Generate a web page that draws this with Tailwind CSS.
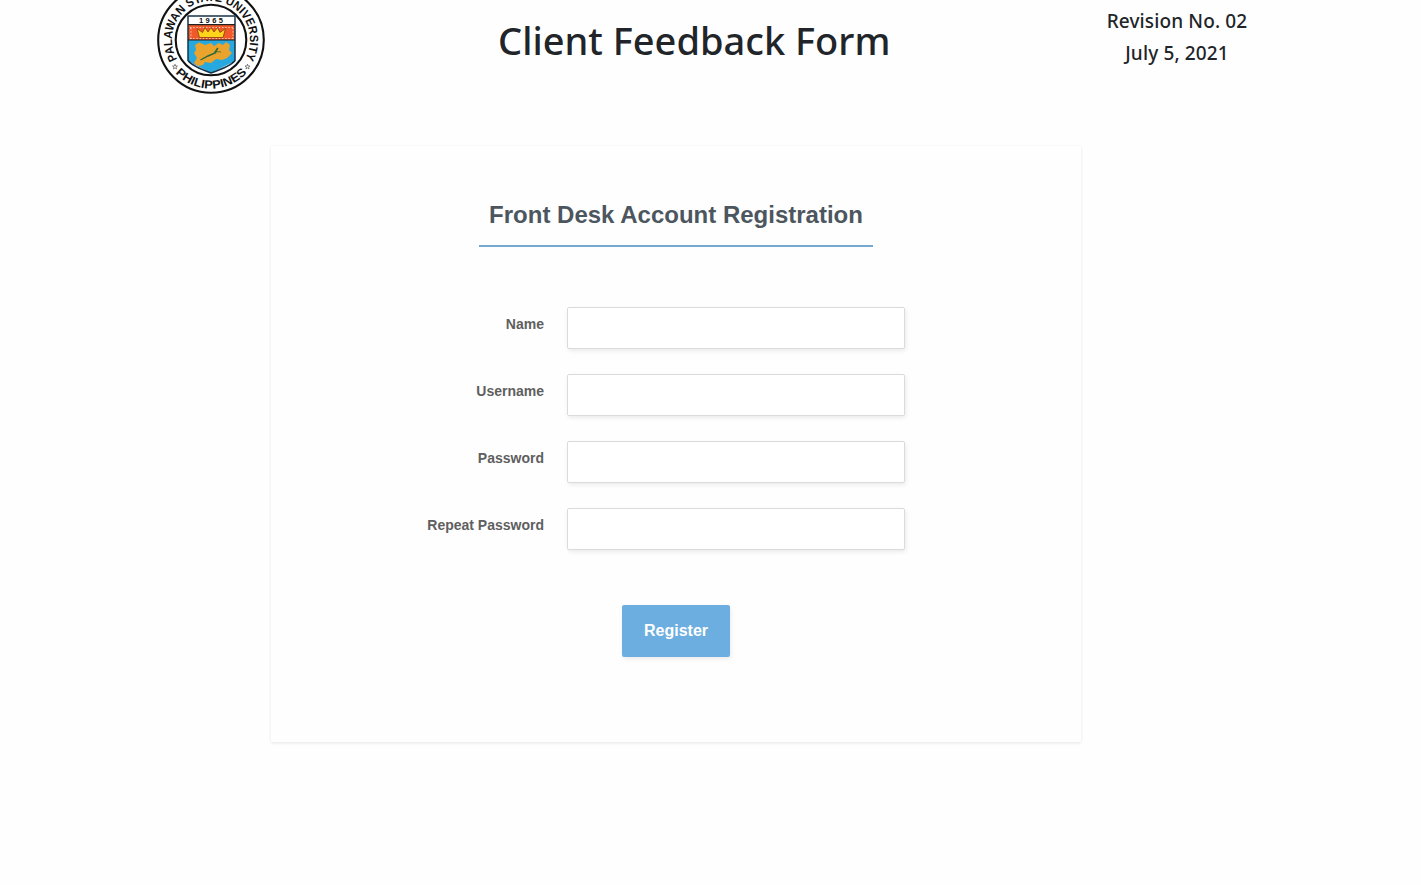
<!DOCTYPE html>
<html lang="en">
<head>
<meta charset="utf-8">
<title>Client Feedback Form</title>
<script src="https://cdn.jsdelivr.net/npm/@tailwindcss/browser@4"></script>
</head>
<body class="h-[885px] overflow-hidden bg-[#fefefe]">
<header class="flex h-[146px] items-start pl-[157px]">
  <svg class="-mt-[14px] h-[108px] w-[108px] shrink-0" viewBox="0 0 108 108" role="img" aria-label="University seal">
    <defs>
      <path id="top" d="M20.2 73.4A39 39 0 1 1 87.8 73.4"/>
      <path id="bottom" d="M16.8 85.3A48.6 48.6 0 0 0 91.2 85.3"/>
    </defs>
    <circle cx="54" cy="54" r="52.8" fill="#fff" stroke="#111" stroke-width="2.1"/>
    <circle cx="54" cy="54" r="35.3" fill="#fff" stroke="#111" stroke-width="2.1"/>
    <g font-family="Liberation Sans, sans-serif" font-weight="700" fill="#111">
      <text font-size="12"><textPath href="#top" textLength="162" lengthAdjust="spacingAndGlyphs">PALAWAN STATE UNIVERSITY</textPath></text>
      <text font-size="11.700"><textPath href="#bottom" startOffset="2.5" textLength="80" lengthAdjust="spacingAndGlyphs">PHILIPPINES</textPath></text>
    </g>
    <path d="M31 30H78V74Q76 80 54 87Q33 80 31 74Z" fill="#fff"/>
    <path d="M31 54H78V75L54 87L31 75Z" fill="#27a8df"/>
    <path d="M31 39H78V54H31Z" fill="#f0592a"/>
    <path d="M33 41.5H77M33 52.5H77M34 42V53M76 42V53" fill="none" stroke="#ffd9c8" stroke-width=".9" stroke-dasharray="1.4 1.8"/>
    <path d="M42.500 51.500L40 42.500L45.500 46.500L48 41.500L51 46L54 41.500L57 46L60.500 41.500L63 46.500L68.500 42.500L66 51.500Z" fill="#ffd51c" stroke="#8a3a10" stroke-width=".8"/>
    <path d="M38 59L42 56.500L48 59L54 57L57 60L62 57L66 59L69 56L73 59L72 64L75 67L70 72L65 74L59 73L54 77L48 76L46 79L41 80L37 77L40 72L37 67L39 64Z" fill="#eaa42e"/>
    <path d="M43.500 74L51 70L57 67.500L61 62" fill="none" stroke="#276739" stroke-width="1.400"/>
    <path d="M58 65.500L64 66M60 62.500L58.500 68" fill="none" stroke="#276739" stroke-width=".8"/>
    <path d="M31 30H78V74.500Q74 80 54 87Q35 80 31 74.500Z" fill="none" stroke="#17354b" stroke-width="1.500"/>
    <path d="M31 38.700H78M31 54H78" stroke="#222" stroke-width="1.200"/>
    <text x="42" y="37.200" font-family="Liberation Sans, sans-serif" font-size="7.500" font-weight="700" fill="#111" textLength="24">1965</text>
    <g fill="#fff" stroke="#222" stroke-width=".5">
      <path id="star" d="M18 78.200L18.600 80L20.500 80L19 81.100L19.600 83L18 81.900L16.400 83L17 81.100L15.500 80L17.400 80Z"/>
      <use href="#star" x="72.500"/>
    </g>
  </svg>
  <h1 class="ml-[233px] mt-2.5 w-[392px] whitespace-nowrap font-['Noto_Sans','Open_Sans',sans-serif] text-[38px] font-medium leading-[60px] text-[#212529]">Client Feedback Form</h1>
  <div class="ml-[207px] mt-[5px] w-[160px] whitespace-nowrap text-center font-['Noto_Sans','Open_Sans',sans-serif] text-[19px] font-medium leading-8 text-[#212529]">
    <p class="tracking-[0.13px]">Revision No. 02</p>
    <p class="tracking-[0.13px]">July 5, 2021</p>
  </div>
</header>
<main class="ml-[271px] flex h-[596px] w-[810px] flex-col items-center bg-[#fefefe] pt-[53px] font-['Liberation_Sans',Arial,sans-serif] shadow-[0_1px_3px_rgba(0,0,0,0.1)]">
  <h2 class="h-[48px] w-[394px] whitespace-nowrap border-b-2 border-[#76a9cf] text-center text-2xl font-bold leading-8 text-[#4c565e]">Front Desk Account Registration</h2>
  <form class="mt-[60px] flex w-full flex-col items-center">
    <div class="flex w-full flex-col gap-[25px] text-sm font-bold text-[#5f5f5f]">
      <div class="flex h-[42px]"><label for="name" class="mt-[7px] w-[273px] text-right leading-5">Name</label><input id="name" class="ml-[23px] w-[338px] rounded-[2px] border border-[#dbdbdb] bg-white shadow-[1px_2px_4px_rgba(0,0,0,0.08)]"></div>
      <div class="flex h-[42px]"><label for="user" class="mt-[7px] w-[273px] text-right leading-5">Username</label><input id="user" class="ml-[23px] w-[338px] rounded-[2px] border border-[#dbdbdb] bg-white shadow-[1px_2px_4px_rgba(0,0,0,0.08)]"></div>
      <div class="flex h-[42px]"><label for="pass" class="mt-[7px] w-[273px] text-right leading-5">Password</label><input id="pass" type="password" class="ml-[23px] w-[338px] rounded-[2px] border border-[#dbdbdb] bg-white shadow-[1px_2px_4px_rgba(0,0,0,0.08)]"></div>
      <div class="flex h-[42px]"><label for="repeat" class="mt-[7px] w-[273px] text-right leading-5">Repeat Password</label><input id="repeat" type="password" class="ml-[23px] w-[338px] rounded-[2px] border border-[#dbdbdb] bg-white shadow-[1px_2px_4px_rgba(0,0,0,0.08)]"></div>
    </div>
    <button type="button" class="mt-[55px] h-[52px] w-[108px] rounded-[2px] bg-[#6caee0] text-base font-bold text-white shadow-[1px_2px_4px_rgba(0,0,0,0.08)]">Register</button>
  </form>
</main>
</body>
</html>
